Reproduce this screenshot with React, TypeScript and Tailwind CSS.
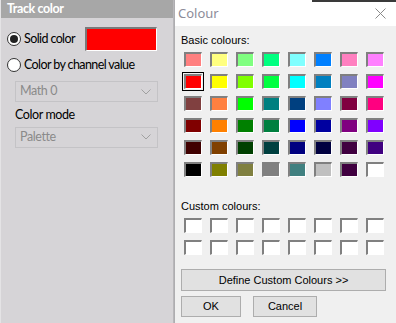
import React from 'react';

const basic: string[][] = [
  ['#FF8080', '#FFFF80', '#80FF80', '#00FF80', '#80FFFF', '#0080FF', '#FF80C0', '#FF80FF'],
  ['#FF0000', '#FFFF00', '#80FF00', '#00FF40', '#00FFFF', '#0080C0', '#8080C0', '#FF00FF'],
  ['#804040', '#FF8040', '#00FF00', '#008080', '#004080', '#8080FF', '#800040', '#FF0080'],
  ['#800000', '#FF8000', '#008000', '#008040', '#0000FF', '#0000A0', '#800080', '#8000FF'],
  ['#400000', '#804000', '#004000', '#004040', '#000080', '#000040', '#400040', '#400080'],
  ['#000000', '#808000', '#808040', '#808080', '#408080', '#C0C0C0', '#400040', '#FFFFFF'],
];

function Swatch({ color, selected }: { color: string; selected?: boolean }) {
  return (
    <div className={`w-[22px] h-[19px] p-[1px] ${selected ? 'border border-black' : 'border border-transparent'}`}>
      <div
        className="w-[18px] h-[15px] border-t-2 border-l-2 border-b border-r border-t-[#808080] border-l-[#808080] border-b-white border-r-white"
        style={{ backgroundColor: color }}
      />
    </div>
  );
}

function Radio({ checked, label }: { checked?: boolean; label: string }) {
  return (
    <div className="flex items-center gap-[3px]">
      <div className="w-[14px] h-[14px] rounded-full border border-[#333] bg-white flex items-center justify-center">
        {checked && <div className="w-[8px] h-[8px] rounded-full bg-[#222]" />}
      </div>
      <span className="text-[12.5px] tracking-[-0.6px] text-black leading-none">{label}</span>
    </div>
  );
}

function Select({ value }: { value: string }) {
  return (
    <div className="h-[21px] w-[143px] border border-[#c4c3c6] flex items-center justify-between pl-[4px] pr-[6px]">
      <span className="text-[12.5px] tracking-[-0.4px] text-[#8a8a8a] leading-none">{value}</span>
      <svg width="10" height="6" viewBox="0 0 10 6">
        <path d="M0.5 0.5 L5 5 L9.5 0.5" fill="none" stroke="#a0a0a0" strokeWidth="1" />
      </svg>
    </div>
  );
}

export default function App() {
  return (
    <div className="w-[396px] h-[323px] flex overflow-hidden bg-[#d6d4d7]" style={{ fontFamily: 'Lato, "Noto Sans", sans-serif' }}>
      {/* Left panel */}
      <div className="w-[173px] shrink-0 flex flex-col bg-[#d6d4d7] border-l border-[#e4e3e5]">
        <div className="h-[18px] bg-[#a7a7a7] flex items-center pl-[6px]">
          <span className="text-white font-bold text-[12.5px] tracking-[-0.4px] leading-none">Track color</span>
        </div>
        <div className="flex flex-col pl-[6px] pt-[9px]">
          <div className="flex items-center">
            <Radio checked label="Solid color" />
            <div className="ml-[10px] w-[72px] h-[24px] bg-[#ff0000] border-t-2 border-l-2 border-b border-r border-t-[#7a7a7a] border-l-[#7a7a7a] border-b-white border-r-white" />
          </div>
          <div className="mt-[7px]">
            <Radio label="Color by channel value" />
          </div>
          <div className="ml-[8px] mt-[9px] flex flex-col">
            <Select value="Math 0" />
            <span className="text-[12.5px] tracking-[-0.4px] text-black leading-none mt-[7px] mb-[5px]">Color mode</span>
            <Select value="Palette" />
          </div>
        </div>
      </div>
      {/* Shadow */}
      <div className="w-[2px] shrink-0 bg-gradient-to-r from-[#bdbcbf] to-[#a9a8ab]" />
      {/* Dialog */}
      <div className="flex-1 flex flex-col bg-[#f0f0f0] relative">
        <div className="absolute top-0 right-0 w-[84px] h-[2px] bg-[#3a3a3a]" />
        <div className="h-[26px] bg-white flex items-center justify-between pl-[3px] pr-[10px]" style={{ fontFamily: '"Noto Sans", sans-serif' }}>
          <span className="text-[13px] text-[#8c8c99] leading-none">Colour</span>
          <svg width="11" height="11" viewBox="0 0 11 11">
            <path d="M0.5 0.5 L10.5 10.5 M10.5 0.5 L0.5 10.5" stroke="#8a8a8a" strokeWidth="1" />
          </svg>
        </div>
        <div className="flex flex-col pl-[6px] pr-[10px]" style={{ fontFamily: '"Liberation Sans", Arial, sans-serif' }}>
          <span className="text-[11px] text-black leading-none mt-[9px]">Basic colours:</span>
          <div className="grid grid-cols-8 w-[204px] gap-x-[4px] gap-y-[3px] mt-[4px] ml-[1px]">
            {basic.map((row, r) =>
              row.map((c, i) => <Swatch key={`${r}-${i}`} color={c} selected={r === 1 && i === 0} />)
            )}
          </div>
          <span className="text-[11px] text-black leading-none mt-[22px]">Custom colours:</span>
          <div className="grid grid-cols-8 w-[204px] gap-x-[4px] gap-y-[3px] mt-[4px] ml-[1px]">
            {Array.from({ length: 16 }).map((_, i) => (
              <Swatch key={i} color="#ffffff" />
            ))}
          </div>
          <button className="mt-[12px] h-[22px] w-[205px] bg-[#e1e1e1] border border-[#adadad] text-[11px] text-black leading-none">
            Define Custom Colours &gt;&gt;
          </button>
          <div className="flex gap-[12px] mt-[5px]">
            <button className="h-[21px] w-[60px] bg-[#e1e1e1] border border-[#adadad] text-[11px] text-black leading-none">OK</button>
            <button className="h-[21px] w-[64px] bg-[#e1e1e1] border border-[#adadad] text-[11px] text-black leading-none">Cancel</button>
          </div>
        </div>
      </div>
    </div>
  );
}
